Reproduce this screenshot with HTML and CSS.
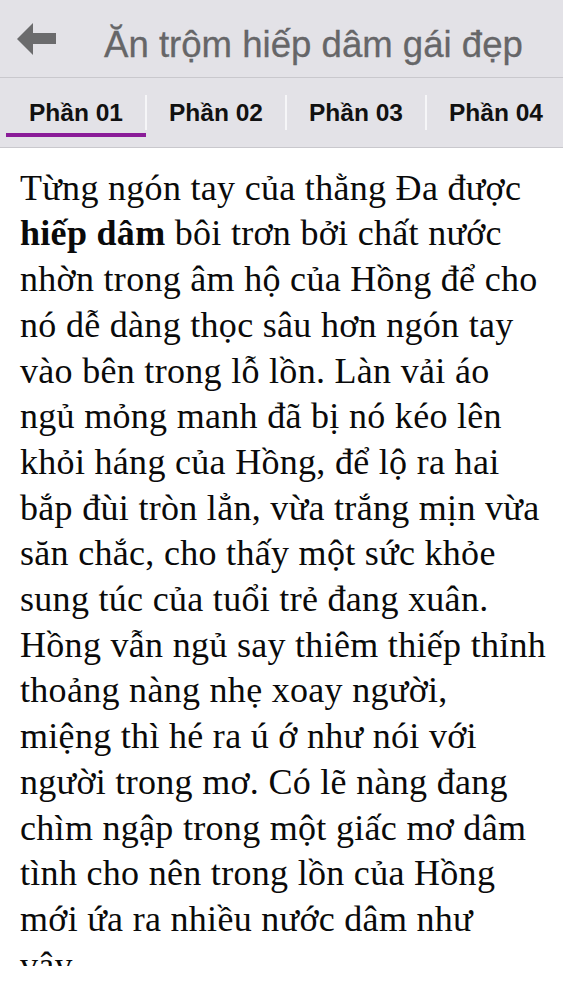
FILE: index.html
```html
<!DOCTYPE html>
<html lang="vi">
<head>
<meta charset="utf-8">
<link rel="stylesheet" href="styles.css">
</head>
<body>
<div class="app">
  <header class="topbar">
    <span class="back">
      <svg width="40" height="32" viewBox="0 0 40 32"><path d="M0 16 L16 0 L16 10 L39 10 L39 21 L16 21 L16 32 Z" fill="#6b6b6d"/></svg>
    </span>
    <h1 class="title">Ăn trộm hiếp dâm gái đẹp</h1>
  </header>
  <nav class="tabs">
    <div class="tab active">Phần 01</div>
    <div class="tab">Phần 02</div>
    <div class="tab">Phần 03</div>
    <div class="tab">Phần 04</div>
  </nav>
  <main class="content">
    <p class="story">Từng ngón tay của thằng Đa được <b>hiếp dâm</b> bôi trơn bởi chất nước nhờn trong âm hộ của Hồng để cho nó dễ dàng thọc sâu hơn ngón tay vào bên trong lỗ lồn. Làn vải áo ngủ mỏng manh đã bị nó kéo lên khỏi háng của Hồng, để lộ ra hai bắp đùi tròn lẳn, vừa trắng mịn vừa săn chắc, cho thấy một sức khỏe sung túc của tuổi trẻ đang xuân. Hồng vẫn ngủ say thiêm thiếp thỉnh thoảng nàng nhẹ xoay người, miệng thì hé ra ú ớ như nói với người trong mơ. Có lẽ nàng đang chìm ngập trong một giấc mơ dâm tình cho nên trong lồn của Hồng mới ứa ra nhiều nước dâm như<br>vậy.</p>
  </main>
</div>
</body>
</html>
```

FILE: styles.css
```css
html, body {
  margin: 0;
  padding: 0;
  background: #ffffff;
}
.app {
  width: 563px;
  height: 1000px;
  overflow: hidden;
  background: #ffffff;
}
.topbar {
  height: 78px;
  box-sizing: border-box;
  border-bottom: 1px solid #c9c8cd;
  background: #e3e2e7;
  display: flex;
  align-items: flex-start;
}
.back {
  display: flex;
  margin-left: 17px;
  margin-top: 23px;
}
.title {
  margin: 24px 0 0 47px;
  font-family: "Liberation Sans", Arial, sans-serif;
  font-weight: normal;
  font-size: 36.6px;
  line-height: normal;
  color: #666668;
  -webkit-text-stroke: 0.3px #666668;
}
.tabs {
  display: flex;
  height: 70px;
  box-sizing: border-box;
  border-bottom: 1px solid #c9c8cd;
  background: #e3e2e7;
  padding-left: 6px;
}
.tab {
  width: 140px;
  flex: none;
  height: 55px;
  box-sizing: border-box;
  padding-top: 21px;
  text-align: center;
  font-family: "Liberation Sans", Arial, sans-serif;
  font-weight: bold;
  font-size: 24.5px;
  line-height: normal;
  color: #111111;
  position: relative;
}
.tab::before {
  content: "";
  position: absolute;
  right: -1px;
  top: 17px;
  width: 2px;
  height: 35px;
  background: #f6f6f8;
}
.tab.active::after {
  content: "";
  position: absolute;
  left: 0;
  right: 0;
  bottom: -4px;
  height: 4px;
  background: #8a1c98;
}
.content {
  height: 818px;
  overflow: hidden;
  box-sizing: border-box;
  padding: 17.7px 15px 0 20px;
}
.story {
  margin: 0;
  font-family: "Liberation Serif", "Times New Roman", serif;
  font-size: 36px;
  letter-spacing: 0.3px;
  line-height: 45.7px;
  color: #0a0a0a;
}
.story b {
  font-weight: bold;
}
```
